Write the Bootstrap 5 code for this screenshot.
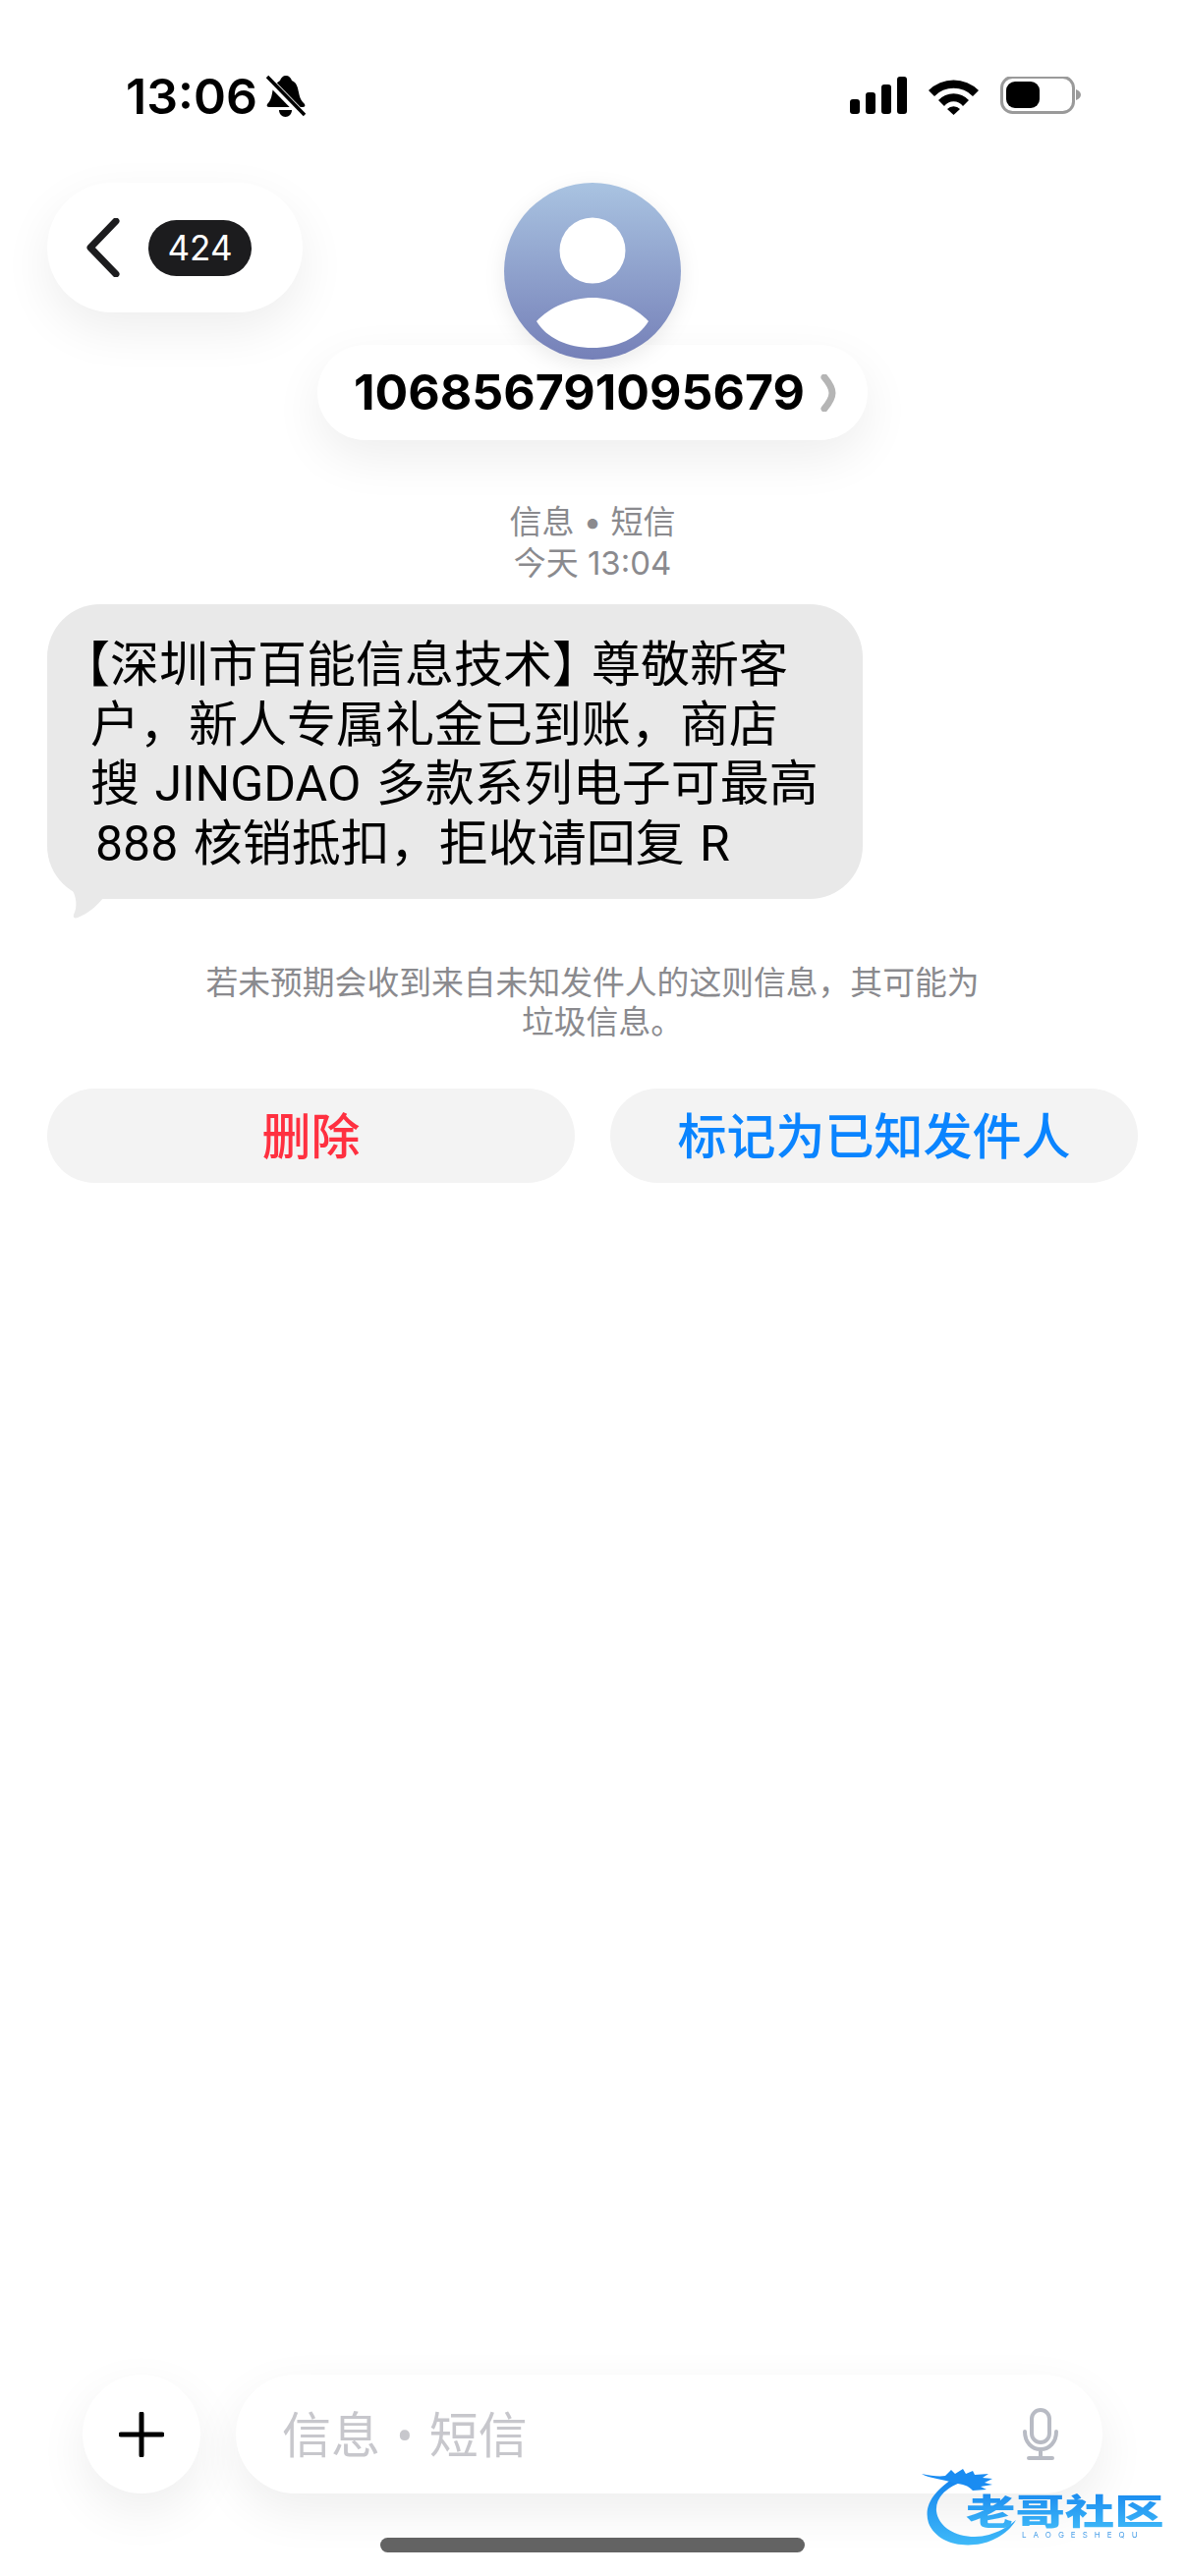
<!DOCTYPE html>
<html lang="zh-CN">
<head>
    <meta charset="UTF-8">
    <title>信息</title>
    <meta name="viewport" content="width=device-width, initial-scale=1">
    <link href="https://cdn.jsdelivr.net/npm/bootstrap@5.3.3/dist/css/bootstrap.min.css" rel="stylesheet">
    <style>
        body {
            font-family: Roboto, "Noto Sans CJK SC", sans-serif;
            background: #fff;
            color: #000;
            overflow: hidden;
        }

        .phone-page {
            height: 2622px;
            padding: 0 48px 24px;
        }

        /* status bar */
        .status-row {
            height: 186px;
            padding: 70px 58px 0 80px;
        }

        .status-time {
            font-family: Inter, sans-serif;
            font-weight: 600;
            font-size: 50px;
            line-height: 56px;
        }

        .status-icons {
            margin-top: 8px;
        }

        /* header */
        .head-grid {
            display: grid;
            grid-template-columns: 1fr auto 1fr;
        }

        .back-pill {
            width: 260px;
            height: 132px;
            border-radius: 66px;
            padding-left: 40px;
            background: #fff;
            box-shadow: 0 18px 50px rgba(0, 0, 0, .07);
        }

        .count-pill {
            width: 105px;
            height: 57px;
            margin-left: 29px;
            border-radius: 29px;
            background: #1c1c1e;
            color: #fff;
            font-family: Inter, sans-serif;
            font-size: 35px;
        }

        .avatar-wrap {
            width: 180px;
            height: 180px;
            z-index: 2;
            filter: drop-shadow(0 6px 10px rgba(0, 0, 0, .08));
        }

        .name-pill {
            width: 560px;
            height: 97px;
            margin-top: -15px;
            padding-left: 5px;
            border-radius: 49px;
            background: #fff;
            box-shadow: 0 18px 50px rgba(0, 0, 0, .07);
            font-family: Inter, sans-serif;
            font-weight: 700;
            font-size: 50px;
        }

        .name-arrow {
            margin-left: 16px;
        }

        /* messages */
        .meta-text {
            margin-top: 62px;
            font-family: Inter, "Noto Sans CJK SC", sans-serif;
            font-size: 33px;
            line-height: 42px;
            color: #8a8a8e;
        }

        .sms-bubble {
            width: 830px;
            height: 300px;
            margin-top: 21px;
            padding: 32px 0 0 44px;
            border-radius: 54px;
            background: #e9e9e9;
            font-size: 50px;
            line-height: 60.5px;
            text-indent: -30px;
            word-spacing: 3px;
            white-space: nowrap;
        }

        .sms-close {
            letter-spacing: -10px;
        }

        .sms-tail {
            left: 19px;
            bottom: -20px;
        }

        .sms-num {
            padding-left: 5px;
        }

        .hint-text {
            margin-top: 66px;
            font-size: 32.800px;
            line-height: 40px;
            color: #8a8a8e;
        }

        .hint-tail {
            padding-left: 20px;
        }

        .action-row {
            margin-top: 47px;
            gap: 36px;
        }

        .action-btn {
            flex: 1 1 0;
            height: 96px;
            padding-top: 5px;
            border: 0;
            border-radius: 48px;
            background: #f3f3f3;
            font-size: 50px;
            font-weight: 500;
            line-height: 1;
        }

        .act-red { color: #ff3040; }
        .act-blue { color: #0a84ff; }

        /* input bar */
        .input-row {
            padding-left: 36px;
            padding-right: 36px;
            gap: 36px;
        }

        .plus-btn {
            width: 120px;
            height: 121px;
            border-radius: 50%;
            background: #fff;
            box-shadow: 0 18px 50px rgba(0, 0, 0, .07);
        }

        .msg-input {
            height: 121px;
            border-radius: 61px;
            padding: 0 45px 0 47px;
            background: #fff;
            box-shadow: 0 18px 50px rgba(0, 0, 0, .07);
            font-size: 50px;
            color: #c7c7cc;
        }

        .msg-hold {
            padding-top: 5px;
            word-spacing: 4px;
        }

        .home-bar {
            width: 432px;
            height: 15px;
            margin: 45px auto 0;
            border-radius: 8px;
            background: #636363;
        }

        /* watermark sits over the input bar */
        .wm-mark {
            left: 938px;
            top: 2510px;
            width: 250px;
            height: 88px;
            filter: blur(.6px);
        }

        .wm-title {
            left: 45px;
            top: 22px;
            font-family: "Noto Sans CJK SC", sans-serif;
            font-weight: 900;
            font-size: 36px;
            line-height: 44px;
            white-space: nowrap;
            transform: scaleX(1.4);
            transform-origin: left top;
            background: linear-gradient(180deg, #1685ee, #3fb9f8);
            -webkit-background-clip: text;
            background-clip: text;
            color: transparent;
        }

        .wm-sub {
            left: 102px;
            top: 65px;
            font-family: Inter, sans-serif;
            font-size: 8px;
            line-height: 10px;
            letter-spacing: 7px;
            color: #4a9fe8;
            white-space: nowrap;
        }
    </style>
</head>

<body>
    <div class="phone-page d-flex flex-column">

        <!-- Status bar -->
        <div class="status-row d-flex justify-content-between align-items-start mx-n5">
            <div class="d-flex align-items-center">
                <span class="status-time">13:06</span>
                <svg class="ms-2" width="42" height="46" viewBox="0 0 42 46">
                    <path d="M21 2c3 0 5 2 6 5 5 2 6 7 7 12 1 6 3 9 6 12 1 2 0 3-2 3H4c-2 0-3-1-2-3 3-3 4-6 5-11 1-6 3-10 8-13 1-3 3-5 6-5z"/>
                    <path d="M14 37h13c0 4-3 7-6.500 7S14 41 14 37z"/>
                    <path d="M0 3 38 42" stroke="#fff" stroke-width="8"/>
                    <path d="M2 3 40 42" stroke="#000" stroke-width="3.500"/>
                </svg>
            </div>
            <div class="status-icons d-flex align-items-center">
                <svg width="235" height="40" viewBox="0 0 235 40">
                    <rect x="0" y="23" width="10" height="15" rx="3"/>
                    <rect x="16" y="16" width="10" height="22" rx="3"/>
                    <rect x="32" y="8" width="10" height="30" rx="3"/>
                    <rect x="48" y="0" width="10" height="38" rx="3"/>
                    <path d="M80 14a36 36 0 0 1 51 0l-6 6a27 27 0 0 0-39 0z"/>
                    <path d="M90 24a21 21 0 0 1 31 0l-6 6a12 12 0 0 0-19 0z"/>
                    <path d="M99 33a9 9 0 0 1 13 0l-6.500 6z"/>
                    <rect x="154.500" y="0.500" width="73" height="36" rx="11" fill="none" stroke="#9a9a9a" stroke-width="3"/>
                    <rect x="159" y="5" width="34" height="27" rx="9"/>
                    <path d="M230 13c3 1 5 3 5 5.500s-2 4.500-5 5.500z" fill="#9a9a9a"/>
                </svg>
            </div>
        </div>

        <!-- Header -->
        <div class="head-grid">
            <div class="back-pill d-flex align-items-center">
                <svg width="34" height="60" viewBox="0 0 34 60">
                    <path d="M30 3 4 30l26 27" fill="none" stroke="#1c1c1e" stroke-width="7" stroke-linecap="round" stroke-linejoin="round"/>
                </svg>
                <span class="count-pill d-flex align-items-center justify-content-center">424</span>
            </div>
            <div class="d-flex flex-column align-items-center">
                <div class="avatar-wrap position-relative">
                    <svg width="180" height="180" viewBox="0 0 180 180">
                        <defs>
                            <linearGradient id="avatarFill" x1="0" y1="0" x2="0" y2="1">
                                <stop offset="0" stop-color="#a9c3e1"/>
                                <stop offset="1" stop-color="#7580b8"/>
                            </linearGradient>
                        </defs>
                        <circle cx="90" cy="90" r="90" fill="url(#avatarFill)"/>
                        <circle cx="90" cy="69" r="33.500" fill="#fff"/>
                        <path d="M33 141C47 126 69 117 90 117c21 0 43 9 57 24-10 17-32 27-57 27s-47-10-57-27z" fill="#fff"/>
                    </svg>
                </div>
                <div class="name-pill d-flex align-items-center justify-content-center">
                    <span>106856791095679</span>
                    <svg class="name-arrow" width="16" height="38" viewBox="0 0 16 38">
                        <path d="M4 3c5 6 8 11 8 16s-3 10-8 16" fill="none" stroke="#b5b5b5" stroke-width="7" stroke-linecap="round"/>
                    </svg>
                </div>
            </div>
            <div></div>
        </div>

        <!-- Message -->
        <div class="meta-text text-center">信息 • 短信<br>今天 13:04</div>

        <div class="sms-bubble position-relative">
            【深圳市百能信息技术<span class="sms-close">】</span>尊敬新客<br>
            户，新人专属礼金已到账，商店<br>
            搜 JINGDAO 多款系列电子可最高<br>
            <span class="sms-num">888 核销抵扣，拒收请回复 R</span>
            <svg class="sms-tail position-absolute" width="46" height="30" viewBox="0 0 46 30">
                <path d="M6 0c5 8 6 18 2 26-1 3 1 4 4 3 10-4 22-12 32-29z" fill="#e9e9e9"/>
            </svg>
        </div>

        <div class="hint-text text-center">若未预期会收到来自未知发件人的这则信息，其可能为<br><span class="hint-tail">垃圾信息。</span></div>

        <div class="action-row d-flex">
            <button type="button" class="action-btn act-red">删除</button>
            <button type="button" class="action-btn act-blue">标记为已知发件人</button>
        </div>

        <!-- Input bar -->
        <div class="input-row d-flex mt-auto">
            <div class="plus-btn flex-shrink-0 d-flex align-items-center justify-content-center">
                <svg width="46" height="46" viewBox="0 0 46 46">
                    <path d="M23 2v42M2 23h42" stroke="#000" stroke-width="5" stroke-linecap="round"/>
                </svg>
            </div>
            <div class="msg-input flex-grow-1 d-flex align-items-center justify-content-between">
                <span class="msg-hold">信息 • 短信</span>
                <svg width="36" height="54" viewBox="0 0 36 54">
                    <rect x="9" y="2" width="18" height="33" rx="9" fill="none" stroke="#b8bbc4" stroke-width="4"/>
                    <path d="M2 24c0 11 7 18 16 18s16-7 16-18M18 42v9M6 51h24" fill="none" stroke="#b8bbc4" stroke-width="4" stroke-linecap="round"/>
                </svg>
            </div>
        </div>

        <div class="home-bar"></div>
    </div>

    <!-- Watermark -->
    <div class="wm-mark position-absolute">
        <svg width="250" height="88" viewBox="0 0 250 88">
            <defs>
                <linearGradient id="wmFill" x1="0" y1="0" x2="0" y2="1">
                    <stop offset="0" stop-color="#1685ee"/>
                    <stop offset="1" stop-color="#3fb9f8"/>
                </linearGradient>
            </defs>
            <path d="M30 14C10 28 2 42 7 58c7 18 30 26 54 21 16-4 28-12 35-24-12 10-26 17-42 17C34 72 17 62 15 46c-1-12 7-22 24-29z" fill="url(#wmFill)"/>
            <path d="M0 8c9 2 18 3 24 2l6-6 4 4 8-5 3 5 7-3 2 4 14-1-6 4 10 1-8 4 8 2-12 2 6 3-14 1c-5-5-10-7-18-7C22 13 8 13 0 8z" fill="#1a8cf2"/>
        </svg>
        <div class="wm-title position-absolute">老哥社区</div>
        <div class="wm-sub position-absolute">LAOGESHEQU</div>
    </div>

    <script src="https://cdn.jsdelivr.net/npm/bootstrap@5.3.3/dist/js/bootstrap.bundle.min.js"></script>
</body>

</html>
